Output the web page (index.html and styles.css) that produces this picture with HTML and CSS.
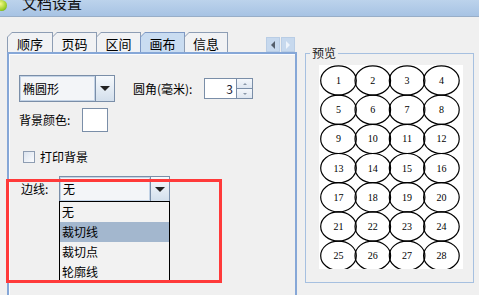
FILE: index.html
```html
<!DOCTYPE html>
<html lang="zh-CN">
<head>
  <meta charset="UTF-8" />
  <title>文档设置</title>
  <link rel="stylesheet" href="styles.css">
</head>
<body>
  <div class="titlebar">
    <span class="app-icon"></span>
    <span class="title">文档设置</span>
  </div>

  <div class="content">
    <div class="tabs-wrap">
      <div class="tabstrip">
        <div class="tab"><div class="tab-in">顺序</div></div>
        <div class="tab"><div class="tab-in">页码</div></div>
        <div class="tab"><div class="tab-in">区间</div></div>
        <div class="tab active"><div class="tab-in">画布</div></div>
        <div class="tab"><div class="tab-in">信息</div></div>
        <div class="tab-scroll">
          <span class="scroll-btn"><i class="arr-left"></i></span>
          <span class="scroll-btn off"><i class="arr-right"></i></span>
        </div>
      </div>

      <div class="panel">
        <div class="row row-shape">
          <div class="combo combo-shape">
            <span class="combo-text">椭圆形</span>
            <span class="combo-btn"><i class="arr-down"></i></span>
          </div>
          <span class="label label-radius">圆角(毫米):</span>
          <div class="spinner">
            <span class="spin-text">3</span>
            <span class="spin-btns">
              <span class="spin-up"><i></i></span>
              <span class="spin-down"><i></i></span>
            </span>
          </div>
        </div>

        <div class="row row-color">
          <span class="label label-color">背景颜色:</span>
          <span class="color-box"></span>
        </div>

        <div class="row row-check">
          <span class="checkbox"></span>
          <span class="label">打印背景</span>
        </div>

        <div class="row row-edge">
          <span class="label label-edge">边线:</span>
          <div class="combo combo-edge">
            <span class="combo-text">无</span>
            <span class="combo-btn"><i class="arr-down"></i></span>
            <ul class="dropdown">
              <li>无</li>
              <li class="selected">裁切线</li>
              <li>裁切点</li>
              <li>轮廓线</li>
            </ul>
          </div>
        </div>
      </div>
    </div>

    <div class="preview">
      <span class="preview-title">预览</span>
      <div class="canvas">
        <svg id="sheet" width="144" height="204" viewBox="0 0 144 204"></svg>
      </div>
    </div>
  </div>

  <div class="highlight"></div>

  <script>
    const COLS = 4;
    const ROWS = 7;

    function drawSheet() {
      const svg = document.getElementById('sheet');
      let out = '';
      for (let r = 0; r < ROWS; r++) {
        for (let c = 0; c < COLS; c++) {
          const cx = 19.5 + c * 34.3;
          const cy = 15.5 + r * 29.2;
          const n = r * COLS + c + 1;
          out += `<ellipse cx="${cx}" cy="${cy}" rx="17.8" ry="14.6" />`;
          out += `<text x="${cx}" y="${cy + 3.5}">${n}</text>`;
        }
      }
      svg.innerHTML = out;
    }

    drawSheet();
  </script>
</body>
</html>
```

FILE: styles.css
```css
* { margin: 0; padding: 0; box-sizing: border-box; }
body {
  width: 479px;
  height: 295px;
  overflow: hidden;
  position: relative;
  background: #f0f0f0;
  color: #000;
  font: 12px/1 "Noto Sans CJK SC", "Liberation Sans", sans-serif;
}

/* window title */
.titlebar {
  height: 17px;
  display: flex;
  align-items: flex-end;
  overflow: hidden;
  background: linear-gradient(#bcd3ec, #a7c3e4);
  border-bottom: 1px solid #98aec8;
  padding-bottom: 6px;
}
.app-icon {
  width: 11px;
  height: 11px;
  margin-left: -4px;
  margin-bottom: -1px;
  border-radius: 50%;
  background: radial-gradient(circle at 40% 35%, #f6f98a, #9fcf2a 60%, #4f9a12);
}
.title {
  margin-left: 15px;
  font-size: 15px;
  line-height: 15px;
  color: #111;
}

.content {
  display: flex;
  align-items: flex-start;
  padding-top: 15px;
}

/* tabs */
.tabs-wrap {
  margin-left: 7px;
  width: 290px;
}
.tabstrip {
  display: flex;
  align-items: flex-end;
  height: 20px;
}
.tab {
  height: 20px;
  padding: 1px 1px 0 1px;
  background: #8d9db4;
  clip-path: polygon(5px 0, 100% 0, 100% 100%, 0 100%, 0 5px);
}
.tab:nth-child(1) { width: 46px; }
.tab:nth-child(2) { width: 45px; }
.tab:nth-child(3) { width: 45px; }
.tab:nth-child(4) { width: 45px; }
.tab:nth-child(5) { width: 44px; }
.tab + .tab { margin-left: -1px; }
.tab-in {
  height: 100%;
  background: #f1f2f4;
  clip-path: polygon(4px 0, 100% 0, 100% 100%, 0 100%, 0 4px);
  display: flex;
  align-items: center;
  justify-content: center;
  padding-top: 1px;
  font-size: 13px;
}
.tab.active { background: #7d98c4; }
.tab.active .tab-in { background: #c9dcf1; }

.tab-scroll {
  display: flex;
  gap: 1px;
  margin-left: auto;
  margin-right: 2px;
}
.scroll-btn {
  width: 14px;
  height: 15px;
  background: #c7d9ee;
  border: 1px solid #b9cde5;
  display: flex;
  align-items: center;
  justify-content: center;
}
.arr-left {
  border-right: 4px solid #555f6c;
  border-top: 4px solid transparent;
  border-bottom: 4px solid transparent;
}
.arr-right {
  border-left: 4px solid #eef4fb;
  border-top: 4px solid transparent;
  border-bottom: 4px solid transparent;
}

/* panel */
.panel {
  height: 243px;
  border-top: 2px solid #86a7d7;
  border-left: 2px solid #86a7d7;
  border-right: 2px solid #86a7d7;
  box-shadow: inset 1px 1px 0 #fafcff;
  padding-left: 10px;
}
.row {
  display: flex;
  align-items: center;
}
.row-shape { margin-top: 21px; }
.row-color { margin-top: 6px; }
.row-check { margin-top: 19px; padding-left: 4px; }
.row-edge { margin-top: 13px; padding-left: 2px; }

.combo {
  position: relative;
  display: flex;
  border: 1px solid #7a8ea8;
  background: #fff;
}
.combo-shape { width: 96px; height: 27px; }
.combo-edge { width: 111px; height: 26px; }
.combo-text {
  flex: 1;
  display: flex;
  align-items: center;
  padding-left: 2px;
  border: 1px solid #c3d3e6;
  background: #f3f5f8;
}
.combo-btn {
  width: 19px;
  border-left: 1px solid #7a8ea8;
  background: linear-gradient(#f6f9fc, #d3dfec);
  display: flex;
  align-items: center;
  justify-content: center;
}
.arr-down {
  border-top: 5px solid #222;
  border-left: 5px solid transparent;
  border-right: 5px solid transparent;
}

.label-radius { margin-left: 18px; width: 71px; }
.label-color { width: 63px; }
.label-edge { width: 38px; }

.spinner {
  display: flex;
  width: 49px;
  height: 21px;
  border: 1px solid #7a8ea8;
  background: #fff;
}
.spin-text {
  flex: 1;
  text-align: right;
  padding-right: 3px;
  line-height: 19px;
  color: #1a2236;
}
.spin-btns {
  width: 16px;
  border-left: 1px solid #7a8ea8;
  display: flex;
  flex-direction: column;
}
.spin-up, .spin-down {
  flex: 1;
  background: linear-gradient(#f4f7fb, #dfe7f1);
  display: flex;
  align-items: center;
  justify-content: center;
}
.spin-up { border-bottom: 1px solid #7a8ea8; }
.spin-up i {
  border-bottom: 2px solid #8a97a8;
  border-left: 2px solid transparent;
  border-right: 2px solid transparent;
}
.spin-down i {
  border-top: 2px solid #8a97a8;
  border-left: 2px solid transparent;
  border-right: 2px solid transparent;
}

.color-box {
  width: 26px;
  height: 24px;
  border: 1px solid #7a8ea8;
  background: #fff;
}

.checkbox {
  width: 12px;
  height: 12px;
  border: 1px solid #8e9db2;
  background: linear-gradient(135deg, #dbe3ee, #fbfcfe);
  margin-right: 5px;
}

.dropdown {
  position: absolute;
  top: 100%;
  left: -1px;
  width: 111px;
  height: 81px;
  list-style: none;
  border: 1px solid #000;
  background: #f2f2f2;
}
.dropdown li {
  height: 20px;
  line-height: 20px;
  padding-left: 2px;
}
.dropdown li.selected { background: #a3b7ce; }

/* preview group */
.preview {
  margin-left: 8px;
  margin-top: 21px;
  width: 169px;
  height: 230px;
  border: 1px solid #a6c0e0;
  padding-left: 13px;
}
.preview-title {
  display: block;
  width: fit-content;
  margin: -7px 0 0 -9px;
  padding: 0 2px;
  line-height: 12px;
  background: #f0f0f0;
  color: #222;
}
.canvas {
  margin-top: 6px;
  width: 144px;
  height: 204px;
  background: #fff;
}
.canvas svg { display: block; }
.canvas ellipse {
  fill: none;
  stroke: #000;
  stroke-width: 1.2;
}
.canvas text {
  font: 10px "Liberation Serif", serif;
  text-anchor: middle;
  fill: #000;
}

/* annotation */
.highlight {
  position: absolute;
  left: 6px;
  top: 179px;
  width: 216px;
  height: 104px;
  border: 3px solid #ff3a3a;
}
```
